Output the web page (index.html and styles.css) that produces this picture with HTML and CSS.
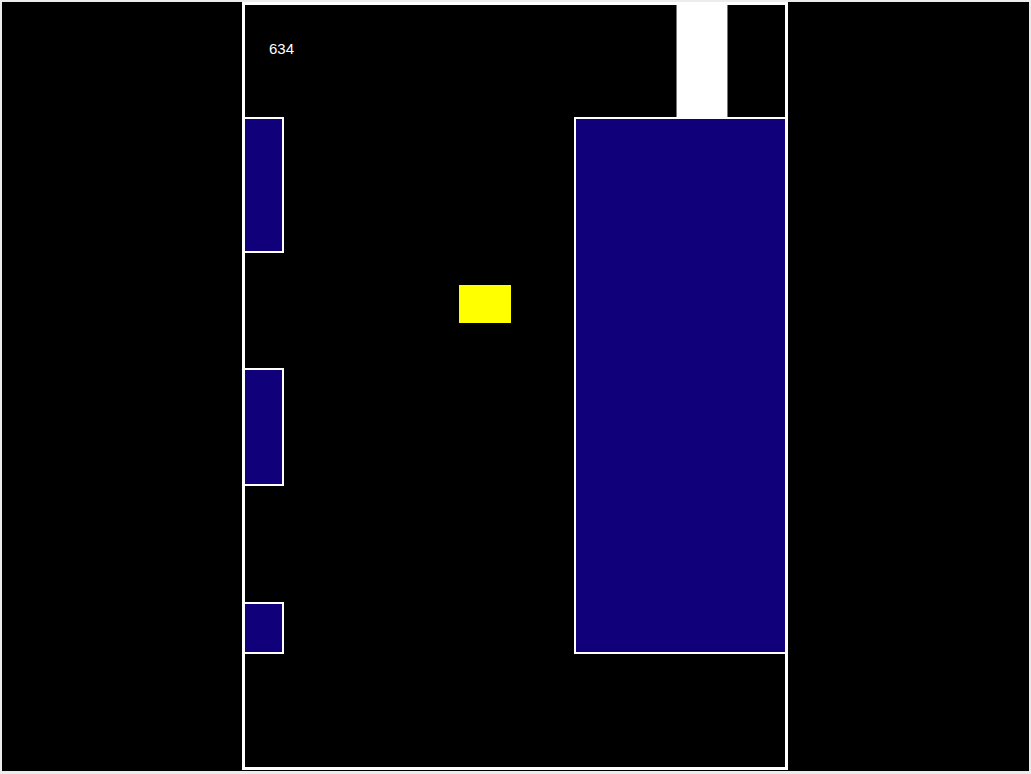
FILE: index.html
```html
<!DOCTYPE html>
<html>
<head>
<meta charset="utf-8">
<link rel="stylesheet" href="styles.css">
</head>
<body>
<div class="stage">
  <div class="board">
    <div class="score">634</div>
    <div class="pipe-top"></div>
    <div class="block" style="left:329px;top:112px;width:209px;height:533px"></div>
    <div class="block" style="left:-4px;top:112px;width:39px;height:132px"></div>
    <div class="block" style="left:-4px;top:363px;width:39px;height:114px"></div>
    <div class="block" style="left:-4px;top:597px;width:39px;height:48px"></div>
    <div class="player"></div>
  </div>
</div>
</body>
</html>
```

FILE: styles.css
```css
html, body {
  margin: 0;
  padding: 0;
  background: #ececec;
  font-family: "Liberation Sans", Arial, sans-serif;
}
.stage {
  margin: 2px 2px 3px 2px;
  padding-right: 1px;
  height: 769px;
  background: #000;
  display: flex;
  justify-content: center;
  align-items: flex-start;
}
.board {
  position: relative;
  width: 540px;
  height: 762px;
  border: 3px solid #fff;
  background: #000;
  overflow: hidden;
}
.score {
  position: absolute;
  left: 24px;
  top: 36px;
  color: #fff;
  font-size: 15px;
  line-height: 16px;
}
.pipe-top {
  position: absolute;
  left: 431px;
  top: -2px;
  width: 50px;
  height: 115px;
  background: #fff;
  border-left: 1px solid #777;
  border-right: 1px solid #777;
}
.block {
  position: absolute;
  background: #10007a;
  border: 2px solid #fff;
}
.player {
  position: absolute;
  left: 214px;
  top: 280px;
  width: 52px;
  height: 38px;
  background: #ffff00;
}
```
